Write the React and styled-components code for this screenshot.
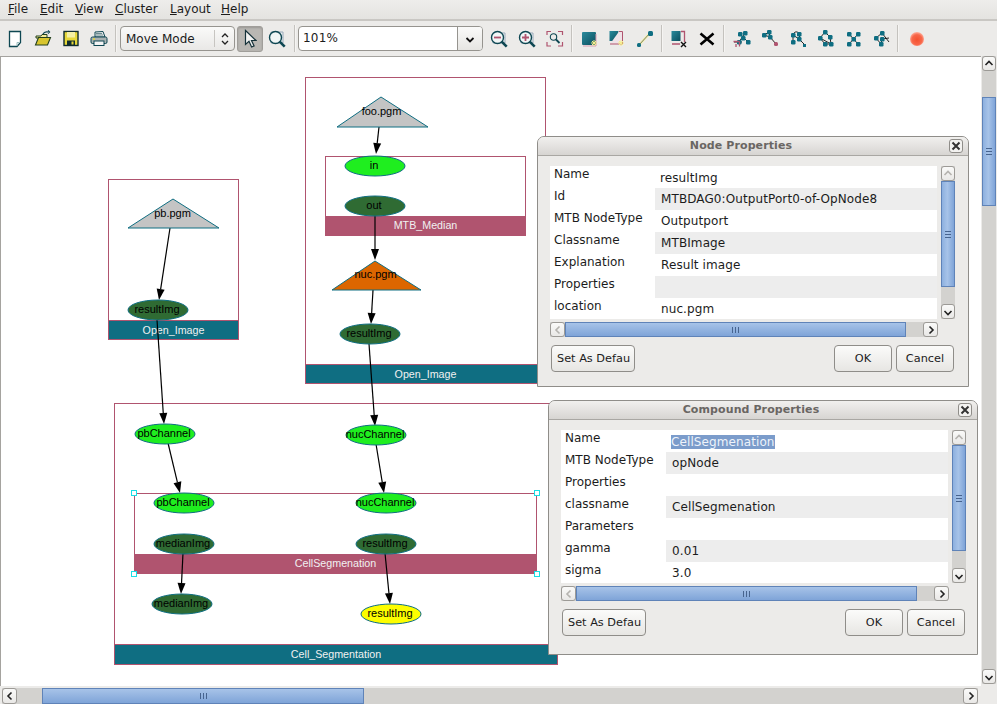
import React from 'react';
import styled, { createGlobalStyle, css } from 'styled-components';

const TEAL = '#0f6e82';
const PINK = '#b0546f';
const UI_FONT = '"DejaVu Sans", Verdana, sans-serif';
const OX = 1;
const OY = 57;

const Global = createGlobalStyle`
  html, body { margin: 0; padding: 0; width: 997px; height: 704px; overflow: hidden; background: #ecebe9; }
  * { box-sizing: border-box; }
`;

const Page = styled.div`
  width: 997px; height: 704px; display: flex; flex-direction: column;
  font: 12px ${UI_FONT}; color: #1c1c1c; background: #ecebe9;
`;

const MenuBar = styled.div`
  height: 21px; flex: none; display: flex; align-items: center; padding: 0 0 0 8px;
  background: linear-gradient(#eeedeb, #e4e3e0); border-bottom: 2px solid #c9c7c3;
`;
const MenuItem = styled.span`
  width: ${p => p.$w}px; line-height: 19px;
  &::first-letter { text-decoration: underline; }
`;

const Toolbar = styled.div`
  height: 35px; flex: none; display: flex; align-items: center; padding-left: 1px; background: #ecebe9;
`;
const ToolBtn = styled.div`
  width: 28px; height: 26px; flex: none; display: flex; align-items: center; justify-content: center;
  ${p => p.$pressed && css`
    width: 26px; background: #b9b7b3; border: 1px solid #a09e9a; border-radius: 3px;
    box-shadow: inset 0 1px 2px #9a9894;
  `}
`;
const Sep = styled.div`
  width: 2px; height: 27px; flex: none; margin: 0 ${p => p.$r ?? 2}px 0 ${p => p.$l ?? 2}px;
  background: linear-gradient(90deg, #c4c2be 50%, #f5f4f2 50%);
`;
const Combo = styled.div`
  width: 115px; height: 25px; flex: none; margin: 0 2px 0 1px; display: flex; align-items: center; padding-left: 5px;
  background: linear-gradient(#fafaf9, #e9e8e6); border: 1px solid #96948f; border-radius: 4px;
`;
const ComboText = styled.span`flex: 1;`;
const ComboSpin = styled.div`
  width: 20px; height: 17px; border-left: 1px solid #c7c5c1; display: flex; align-items: center; justify-content: center;
`;
const ZoomCombo = styled.div`
  width: 185px; height: 25px; flex: none; display: flex; background: #fff;
  border: 1px solid #96948f; border-radius: 4px; overflow: hidden; margin-right: 2px;
`;
const ZoomText = styled.div`flex: 1; padding-left: 4px; line-height: 23px; letter-spacing: .2px;`;
const ZoomArrow = styled.div`
  width: 25px; display: flex; align-items: center; justify-content: center;
  background: linear-gradient(#fafaf9, #e6e5e2); border-left: 1px solid #96948f;
`;

const Workspace = styled.div`
  flex: 1; display: grid; grid-template-columns: 981px 16px; grid-template-rows: 630px 18px; min-height: 0;
`;
const Canvas = styled.div`
  position: relative; overflow: hidden; background: #fff;
  border-left: 1px solid #a5a39f; border-top: 1px solid #a5a39f;
`;
const Compound = styled.div`
  position: absolute; left: ${p => p.$x - OX}px; top: ${p => p.$y - OY}px;
  width: ${p => p.$w}px; height: ${p => p.$h}px;
  border: 1px solid ${PINK}; display: flex; flex-direction: column; justify-content: flex-end;
`;
const CompoundBar = styled.div`
  height: ${p => p.$bar}px; flex: none; text-align: center; color: #f1f1f1;
  background: ${p => (p.$kind === 'op' ? PINK : TEAL)};
  border-top: ${p => (p.$kind === 'op' ? 'none' : `1px solid ${PINK}`)};
  font: 10.7px/18px "Liberation Sans", Arial, sans-serif;
`;
const Handle = styled.div`
  position: absolute; width: 6px; height: 6px; background: #fff; border: 1px solid #19dfe6;
  left: ${p => p.$x - 3 - OX}px; top: ${p => p.$y - 3 - OY}px;
`;
const Graph = styled.svg`
  position: absolute; left: 0; top: 0; width: 980px; height: 629px;
  font: 11px "Liberation Sans", Arial, sans-serif;
`;
const Window = styled.div`
  position: absolute; left: ${p => p.$x - OX}px; top: ${p => p.$y - OY}px;
  width: ${p => p.$w}px; height: ${p => p.$h}px; background: #ecebe9;
  border: 1px solid #8f8d89; border-radius: 7px 7px 0 0; display: flex; flex-direction: column;
`;
const TitleBar = styled.div`
  height: 19px; flex: none; position: relative; text-align: center; padding-right: 24px;
  font: bold 11px/18px ${UI_FONT}; letter-spacing: .1px; color: #6a6663;
  background: linear-gradient(#f1f0ee, #d7d5d2); border-bottom: 1px solid #a9a7a3; border-radius: 6px 6px 0 0;
`;
const CloseBtn = styled.div`
  position: absolute; right: 5px; top: 2px; width: 14px; height: 14px; border: 1px solid #8f8d89; border-radius: 3px;
  background: #f3f2f0; display: flex; align-items: center; justify-content: center;
`;
const WindowBody = styled.div`
  flex: 1; display: grid; grid-template-columns: 387px 14px; column-gap: 4px; grid-template-rows: 153px 15px 27px;
  row-gap: 3px; padding: 10px 0 0 12px; align-content: start;
`;
const Table = styled.div`display: flex; flex-direction: column; background: #fff; overflow: hidden;`;
const Row = styled.div`height: 22px; flex: none; display: grid; grid-template-columns: 105px 1fr;`;
const Label = styled.div`
  padding: 1px 0 0 4px; line-height: 15px; background: #fff;
`;
const Value = styled.div`
  padding: ${p => (p.$first ? '5px 0 0 5px' : '4px 0 0 6px')}; line-height: 15px; letter-spacing: .1px;
  background: ${p => (p.$alt ? '#ededed' : '#fff')};
`;
const Selected = styled.span`background: #7b9ccb; color: #eef3fa;`;
const ButtonRow = styled.div`
  grid-column: 1 / 3; display: flex; align-items: stretch; gap: 4px; margin-top: 5px; padding-left: 1px; padding-right: 1px;
`;
const Btn = styled.div`
  width: ${p => p.$w}px; flex: none; height: 27px; white-space: nowrap; font-size: 11.3px;
  display: flex; align-items: center; justify-content: ${p => (p.$left ? 'flex-start' : 'center')};
  padding-left: ${p => (p.$left ? 5 : 0)}px; margin-right: ${p => p.$mr || 0}px;
  background: linear-gradient(#fbfbfa, #e7e6e3); border: 1px solid #8f8d89; border-radius: 4px;
`;

const Scroll = styled.div`
  display: flex; flex-direction: ${p => (p.$v ? 'column' : 'row')}; background: #d3d2cf;
  ${p => p.$v ? 'width: 14px;' : 'height: 15px;'}
  ${p => p.$outerV && 'width: 14px; margin-left: 1px; height: 628px;'}
  ${p => p.$outerH && 'height: 16px; margin: 2px 0 0 2px; width: 976px;'}
`;
const ScrollBtn = styled.div`
  flex: none; ${p => p.$v ? 'height: 15px;' : 'width: 15px;'}
  display: flex; align-items: center; justify-content: center;
  background: linear-gradient(#fafaf9, #e9e8e6); border: 1px solid #9c9a96; border-radius: 3px;
`;
const Thumb = styled.div`
  flex: none; ${p => (p.$v ? `height: ${p.$size}px;` : `width: ${p.$size}px;`)}
  display: flex; align-items: center; justify-content: center;
  background: ${p => (p.$v ? 'linear-gradient(90deg, #8db0df, #a7c3e8 45%, #7fa4d8)' : 'linear-gradient(#a7c3e8, #7fa4d8)')};
  border: 1px solid #5f83b8;
`;
const Grip = styled.div`
  ${p => p.$v
    ? 'width: 6px; height: 7px; background: repeating-linear-gradient(#47648f 0 1px, transparent 1px 3px);'
    : 'width: 7px; height: 6px; background: repeating-linear-gradient(90deg, #47648f 0 1px, transparent 1px 3px);'}
`;
const Gap = styled.div`flex: ${p => (p.$size ? `0 0 ${p.$size}px` : 1)};`;
const Corner = styled.div`background: #ecebe9;`;
const ChevronSvg = styled.svg`display: block;`;

const Chevron = ({ dir, color = '#222', w = 1.6 }) => {
  const d = { up: 'M1.5 6L5 2.5 8.5 6', down: 'M1.5 4L5 7.5 8.5 4', left: 'M6.5 1.5L3 5l3.5 3.5', right: 'M3.5 1.5L7 5 3.5 8.5' }[dir];
  return <ChevronSvg width="10" height="10" viewBox="0 0 10 10"><path d={d} fill="none" stroke={color} strokeWidth={w} /></ChevronSvg>;
};

const ScrollBar = ({ v, before, size, after, outer, dimStart }) => (
  <Scroll $v={v} $outerV={outer && v} $outerH={outer && !v}>
    <ScrollBtn $v={v}><Chevron dir={v ? 'up' : 'left'} color={dimStart ? '#b5b3af' : '#222'} /></ScrollBtn>
    {before > 0 && <Gap $size={before} />}
    <Thumb $v={v} $size={size}><Grip $v={v} /></Thumb>
    <Gap $size={after} />
    <ScrollBtn $v={v}><Chevron dir={v ? 'down' : 'right'} /></ScrollBtn>
  </Scroll>
);

/* Icons */
const Ico = ({ children }) => <svg width="18" height="18" viewBox="0 0 18 18">{children}</svg>;
const D = '#0e4752';
const Glass = ({ cx = 7.5, cy = 7.5, r = 6 }) => (
  <>
    <circle cx={cx} cy={cy} r={r} fill="#f1f6f6" stroke={D} strokeWidth="1.4" />
    <path d={`M${cx + r * .7} ${cy + r * .7}L${cx + r * .7 + 5} ${cy + r * .7 + 5}`} stroke={D} strokeWidth="2.6" />
  </>
);
const Node = ({ x, y, c = TEAL }) => <rect x={x - 2} y={y - 2} width="4.500" height="4.500" rx="1.200" fill={c} />;
const Net = ({ nodes, lines, pink }) => (
  <Ico>
    <g stroke="#111" strokeWidth=".9" fill="none">{lines.map((l, i) => <path key={i} d={l} />)}</g>
    {nodes.map(([x, y], i) => <Node key={i} x={x} y={y} />)}
    {pink}
  </Ico>
);
const Spark = ({ x, y }) => <path d={`M${x} ${y - 3}v6M${x - 3} ${y}h6M${x - 2} ${y - 2}l4 4M${x + 2} ${y - 2}l-4 4`} stroke="#f6f08a" strokeWidth="1" />;
const Defs = () => (
  <svg width="0" height="0" style={{ position: 'absolute' }}>
    <defs>
      <linearGradient id="tg" x1="0" y1="0" x2="1" y2="1"><stop offset="0" stopColor="#2a8a9c" /><stop offset="1" stopColor="#0b4f5e" /></linearGradient>
      <radialGradient id="rg" cx=".5" cy=".55" r=".55"><stop offset="0" stopColor="#f4512f" /><stop offset=".65" stopColor="#f8674a" /><stop offset="1" stopColor="#ffb3a0" /></radialGradient>
    </defs>
  </svg>
);
const icons = {
  new: <Ico><path d="M3.500 1.500h11v11l-3.500 4h-7.500z" fill="#fff" stroke={D} strokeWidth="1.300" /><path d="M14 12.500h-3v3.500" fill="none" stroke="#9bb" /></Ico>,
  open: <Ico><path d="M2 6h5l1-1.500h5V8H2z" fill="#f2ec9a" stroke="#23401f" strokeWidth="1" /><path d="M1.500 15l3-7.500h12l-3 7.500z" fill="#d8c52e" stroke="#23401f" strokeWidth="1.100" /><path d="M9 4c1-2 3-2.500 5-2M14 .5L15.500 2 14 3.500" fill="none" stroke={D} strokeWidth="1.200" /></Ico>,
  save: <Ico><rect x="2" y="1.500" width="14" height="14" fill="#e6d83a" stroke="#102c30" strokeWidth="1.400" /><rect x="5" y="2" width="8" height="5.500" fill="#f4f0a5" /><rect x="5" y="10.500" width="8" height="5" fill="#102c30" /><rect x="9.500" y="11.500" width="2" height="3" fill="#e6d83a" /></Ico>,
  print: <Ico><path d="M5 7V2l8-.5L15 7z" fill="#e9ecec" stroke={D} /><path d="M6 3.500h6M6 5h7" stroke="#6c8b90" /><rect x="1" y="7" width="16" height="6.500" rx="1.500" fill="#a9b2b2" stroke={D} /><rect x="4" y="11" width="10" height="4.500" fill="#f4f4f4" stroke={D} /><path d="M3 9h2" stroke="#e6d83a" strokeWidth="1.400" /></Ico>,
  arrow: <svg width="14" height="20" viewBox="0 0 14 20"><path d="M2.500 1.500v14l3.500-3.200 2.600 5.700 2.500-1.100-2.600-5.400h4.500z" fill="#f3f3f2" stroke="#16323a" strokeWidth="1.200" /></svg>,
  zoom: <Ico><path d="M3 2h12v11H3z" fill="#e9efef" stroke="#9ab" /><Glass /></Ico>,
  zoomOut: <Ico><path d="M3 3h12v10H3z" fill="#e9efef" stroke="#9ab" /><Glass /><path d="M4 7.500h7" stroke={PINK} strokeWidth="1.800" /></Ico>,
  zoomIn: <Ico><path d="M3 3h12v10H3z" fill="#e9efef" stroke="#9ab" /><Glass /><path d="M4 7.500h7M7.500 4v7" stroke={PINK} strokeWidth="1.800" /></Ico>,
  fit: <Ico><path d="M1 5V1.500h4M12 1.500h4.500V5M1 12v4h4M12 16h4.500v-4" fill="none" stroke={PINK} strokeWidth="1.200" /><circle cx="7.500" cy="7" r="3.200" fill="none" stroke={D} strokeWidth="1.100" /><path d="M10 9.500l3.500 3.500" stroke={D} strokeWidth="1.800" /></Ico>,
  addA: <Ico><rect x="2" y="2" width="14" height="13" rx="1" fill="url(#tg)" /><path d="M3 16h13V4" fill="none" stroke="#d59cb0" strokeWidth="1" /><Spark x={14} y={13} /></Ico>,
  addB: <Ico><rect x="1.500" y="1" width="9" height="10" fill="url(#tg)" /><path d="M11 1.500h3.500V14H2" fill="#efe3e8" stroke={PINK} strokeWidth="1" /><Spark x={13} y={13} /></Ico>,
  edge: <Ico><path d="M3 15L14 3" stroke="#f5f0a8" strokeWidth="2.500" /><path d="M3 15L14 3" stroke="#234" strokeWidth=".6" /><rect x="1" y="13" width="4" height="4" rx="1.500" fill={TEAL} /><rect x="12" y="1" width="5" height="5" rx="1.500" fill={TEAL} /></Ico>,
  delC: <Ico><rect x="1.500" y="1" width="9" height="10" fill="url(#tg)" /><path d="M11 1.500h3.500V12M2 14h8" fill="none" stroke={PINK} strokeWidth="1.300" /><path d="M11 12l5 5M16 12l-5 5" stroke="#111" strokeWidth="1.400" /></Ico>,
  del: <Ico><path d="M2.500 3.500l13 11M15.500 3.500l-13 11" stroke="#000" strokeWidth="2.600" /></Ico>,
  n1: <Net nodes={[[12, 3], [7, 4], [10, 8], [15, 12], [6, 12]]} lines={['M7 4L15 12', 'M12 3L6 12', 'M1 12h8']} pink={<path d="M.5 11.500h6M6.500 11.500v5M3 14v3" stroke={PINK} strokeWidth="1.300" fill="none" />} />,
  n2: <Net nodes={[[3, 5], [8, 2], [9, 7]]} lines={['M3 5L8 2M3 5l6 2M8 2l1 5M9 7l6 7']} pink={<rect x="13" y="12" width="4" height="4" rx="1.500" fill={PINK} />} />,
  n3: <Net nodes={[[4, 5], [10, 4], [4, 12], [10, 9]]} lines={['M4 5C5 1 9 1 10 4M4 5v7M4 5l6 4M10 9l6 6M10 4l1 5']} pink={<rect x="14" y="14" width="3" height="3" fill={TEAL} />} />,
  n4: <Net nodes={[[8, 2], [3, 8], [13, 7], [8, 14], [14, 14]]} lines={['M8 2L3 8M8 2l5 5M13 7l1 7M3 8l5 6M8 14h6M3 8l11 6']} />,
  n5: <Net nodes={[[4, 4], [13, 4], [8.500, 9], [4, 14], [13, 14]]} lines={['M4 4l9 10M13 4L4 14']} />,
  n6: <Net nodes={[[9, 3], [3, 8], [9, 9], [8, 14]]} lines={['M9 3L3 8M9 3l7 9M3 8l5 6M9 9l-1 5M9 9l7-1']} />,
  rec: <Ico><circle cx="9" cy="9" r="7" fill="url(#rg)" /></Ico>,
};

/* Diagram */
const compounds = [
  { x: 108, y: 179, w: 131, h: 161, bar: 19, name: 'Open_Image', kind: 'port' },
  { x: 305, y: 77, w: 241, h: 307, bar: 19, name: 'Open_Image', kind: 'port' },
  { x: 325, y: 156, w: 201, h: 80, bar: 19, name: 'MTB_Median', kind: 'op' },
  { x: 114, y: 403, w: 444, h: 262, bar: 20, name: 'Cell_Segmentation', kind: 'port' },
  { x: 134, y: 493, w: 403, h: 81, bar: 19, name: 'CellSegmenation', kind: 'op' },
];
const GREEN = '#1fee1f';
const DARK = '#2f6b33';
const ellipses = [
  [375, 166, 'in', GREEN], [375, 206, 'out', DARK], [370, 334, 'resultImg', DARK], [158, 310, 'resultImg', DARK],
  [165, 434, 'pbChannel', GREEN], [376, 435, 'nucChannel', GREEN], [184, 503, 'pbChannel', GREEN], [386, 503, 'nucChannel', GREEN],
  [184, 544, 'medianImg', DARK], [386, 544, 'resultImg', DARK], [182, 604, 'medianImg', DARK], [391, 614, 'resultImg', '#fdfd00'],
];
const triangles = [
  [381, 97, 337, 428, 127, 'foo.pgm', '#c4c4c4', 111],
  [375, 261, 332, 421, 290, 'nuc.pgm', '#dc6600', 274],
  [173, 199, 128, 219, 228, 'pb.pgm', '#c4c4c4', 213],
];
const edges = [
  [379, 127, 376, 154], [375, 216, 375, 260], [373, 290, 371, 324], [170, 228, 159, 300],
  [157, 320, 164, 424], [369, 344, 375, 426], [168, 443, 180, 493], [376, 444, 384, 493],
  [183, 553, 181, 594], [385, 553, 390, 604],
];
const handles = [[134, 493], [537, 493], [134, 574], [537, 574]];

const Edge = ({ e: [x1, y1, x2, y2] }) => {
  const a = Math.atan2(y2 - y1, x2 - x1);
  const px = Math.cos(a), py = Math.sin(a);
  const bx = x2 - px * 11, by = y2 - py * 11;
  const pts = `${x2},${y2} ${bx - py * 4},${by + px * 4} ${bx + py * 4},${by - px * 4}`;
  return <><line x1={x1} y1={y1} x2={bx} y2={by} stroke="#000" strokeWidth="1.2" /><polygon points={pts} fill="#000" /></>;
};

const Dialog = ({ x, y, w, h, title, rows, sel }) => (
  <Window $x={x} $y={y} $w={w} $h={h}>
    <TitleBar>
      {title}
      <CloseBtn>
        <svg width="10" height="10" viewBox="0 0 10 10"><path d="M1.500 1.500l7 7M8.500 1.500l-7 7" stroke="#333" strokeWidth="2" /></svg>
      </CloseBtn>
    </TitleBar>
    <WindowBody>
      <Table>
        {rows.map(([k, v], i) => (
          <Row key={k}>
            <Label>{k}</Label>
            <Value $alt={i % 2 === 1} $first={i === 0}>{i === 0 && sel ? <Selected>{v}</Selected> : v}</Value>
          </Row>
        ))}
      </Table>
      <ScrollBar v dimStart before={0} size={106} after={17} />
      <ScrollBar dimStart before={0} size={341} after={17} />
      <div />
      <ButtonRow>
        <Btn $w={84} $left $mr={195}>Set As Defau</Btn>
        <Btn $w={58}>OK</Btn>
        <Btn $w={58}>Cancel</Btn>
      </ButtonRow>
    </WindowBody>
  </Window>
);

const nodeRows = [
  ['Name', 'resultImg'], ['Id', 'MTBDAG0:OutputPort0-of-OpNode8'], ['MTB NodeType', 'Outputport'],
  ['Classname', 'MTBImage'], ['Explanation', 'Result image'], ['Properties', ''], ['location', 'nuc.pgm'],
];
const compRows = [
  ['Name', 'CellSegmenation'], ['MTB NodeType', 'opNode'], ['Properties', ''], ['classname', 'CellSegmenation'],
  ['Parameters', ''], ['gamma', '0.01'], ['sigma', '3.0'],
];
const menus = [['File', 32], ['Edit', 35], ['View', 40], ['Cluster', 55], ['Layout', 51], ['Help', 40]];

export default function App() {
  return (
    <Page>
      <Global />
      <Defs />
      <MenuBar>{menus.map(([m, w]) => <MenuItem key={m} $w={w}>{m}</MenuItem>)}</MenuBar>
      <Toolbar>
        <ToolBtn>{icons.new}</ToolBtn><ToolBtn>{icons.open}</ToolBtn><ToolBtn>{icons.save}</ToolBtn><ToolBtn>{icons.print}</ToolBtn>
        <Sep />
        <Combo>
          <ComboText>Move Mode</ComboText>
          <ComboSpin>
            <svg width="10" height="16" viewBox="0 0 10 16"><path d="M2 6l3-3 3 3M2 10l3 3 3-3" fill="none" stroke="#222" strokeWidth="1.300" /></svg>
          </ComboSpin>
        </Combo>
        <ToolBtn $pressed>{icons.arrow}</ToolBtn>
        <ToolBtn>{icons.zoom}</ToolBtn>
        <Sep $l={3} $r={2} />
        <ZoomCombo>
          <ZoomText>101%</ZoomText>
          <ZoomArrow><Chevron dir="down" color="#111" w={1.8} /></ZoomArrow>
        </ZoomCombo>
        <ToolBtn>{icons.zoomOut}</ToolBtn><ToolBtn>{icons.zoomIn}</ToolBtn><ToolBtn>{icons.fit}</ToolBtn>
        <Sep />
        <ToolBtn>{icons.addA}</ToolBtn><ToolBtn>{icons.addB}</ToolBtn><ToolBtn>{icons.edge}</ToolBtn>
        <Sep />
        <ToolBtn>{icons.delC}</ToolBtn><ToolBtn>{icons.del}</ToolBtn>
        <Sep $l={2} $r={3} />
        <ToolBtn>{icons.n1}</ToolBtn><ToolBtn>{icons.n2}</ToolBtn><ToolBtn>{icons.n3}</ToolBtn><ToolBtn>{icons.n4}</ToolBtn><ToolBtn>{icons.n5}</ToolBtn><ToolBtn>{icons.n6}</ToolBtn>
        <Sep $l={1} $r={4} />
        <ToolBtn>{icons.rec}</ToolBtn>
      </Toolbar>
      <Workspace>
        <Canvas>
          {compounds.map(c => (
            <Compound key={c.name + c.x} $x={c.x} $y={c.y} $w={c.w} $h={c.h}>
              <CompoundBar $kind={c.kind} $bar={c.bar}>{c.name}</CompoundBar>
            </Compound>
          ))}
          <Graph viewBox={`${OX} ${OY} 980 629`}>
            {edges.map((e, i) => <Edge key={i} e={e} />)}
            {triangles.map(([ax, ay, l, r, b, t, fill, ty]) => (
              <g key={t}>
                <polygon points={`${ax},${ay} ${l},${b} ${r},${b}`} fill={fill} stroke={TEAL} />
                <text x={(l + r) / 2 - 1} y={ty + 4} textAnchor="middle">{t}</text>
              </g>
            ))}
            {ellipses.map(([x, y, t, fill], i) => (
              <g key={i}>
                <ellipse cx={x} cy={y} rx="30" ry="10" fill={fill} stroke={TEAL} />
                <text x={x - 1} y={y + 3} textAnchor="middle">{t}</text>
              </g>
            ))}
          </Graph>
          {handles.map(([x, y]) => <Handle key={`${x}${y}`} $x={x} $y={y} />)}
          <Dialog x={537} y={136} w={432} h={251} title="Node Properties" rows={nodeRows} />
          <Dialog x={548} y={400} w={430} h={255} title="Compound Properties" rows={compRows} sel />
        </Canvas>
        <ScrollBar outer v before={26} size={109} after={463} />
        <ScrollBar outer before={25} size={322} after={599} />
        <Corner />
      </Workspace>
    </Page>
  );
}
